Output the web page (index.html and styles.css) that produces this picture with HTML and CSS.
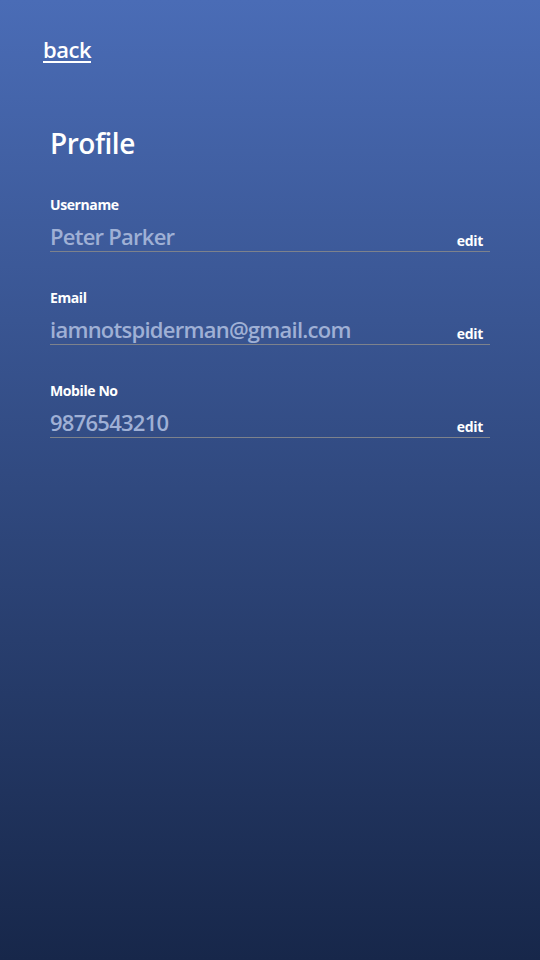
FILE: index.html
```html
<!DOCTYPE html>
<html>
<head>
<meta charset="utf-8">
<link rel="stylesheet" href="styles.css">
</head>
<body>
<div class="page">
  <a class="back" href="#">back</a>
  <h1 class="title">Profile</h1>
  <div class="field">
    <div class="label">Username</div>
    <div class="row"><span class="value">Peter Parker</span><span class="edit">edit</span></div>
  </div>
  <div class="field">
    <div class="label">Email</div>
    <div class="row"><span class="value">iamnotspiderman@gmail.com</span><span class="edit">edit</span></div>
  </div>
  <div class="field">
    <div class="label">Mobile No</div>
    <div class="row"><span class="value">9876543210</span><span class="edit">edit</span></div>
  </div>
</div>
</body>
</html>
```
FILE: styles.css
```css
html, body {
  margin: 0;
  padding: 0;
}
body {
  width: 540px;
  height: 960px;
  background: linear-gradient(to bottom, #4a6cb6 0%, #17274a 100%);
  font-family: "Open Sans", "Noto Sans", sans-serif;
  color: #fff;
}
.page {
  padding: 34px 50px 0 50px;
  display: flex;
  flex-direction: column;
}
.back {
  color: #fff;
  font-size: 22px;
  font-weight: 600;
  text-decoration: underline;
  text-decoration-thickness: 2px;
  text-underline-offset: 3px;
  margin-left: -7px;
  align-self: flex-start;
  line-height: 30px;
  letter-spacing: -0.5px;
}
.title {
  margin: 60px 0 0 0;
  font-size: 28px;
  font-weight: 600;
  line-height: 38px;
  letter-spacing: -0.5px;
}
.field {
  margin-top: 33px;
}
.field + .field {
  margin-top: 36px;
}
.label {
  font-size: 14px;
  font-weight: 700;
  line-height: 20px;
  letter-spacing: -0.4px;
}
.row {
  display: flex;
  justify-content: space-between;
  align-items: flex-end;
  border-bottom: 1px solid #7d828c;
  margin-top: 5px;
  height: 31px;
}
.value {
  font-size: 22px;
  font-weight: 600;
  color: #9fb0d5;
  line-height: 29px;
  letter-spacing: -0.75px;
}
.edit {
  font-size: 14px;
  font-weight: 700;
  line-height: 20px;
  padding-right: 7px;
  letter-spacing: -0.3px;
}
```
